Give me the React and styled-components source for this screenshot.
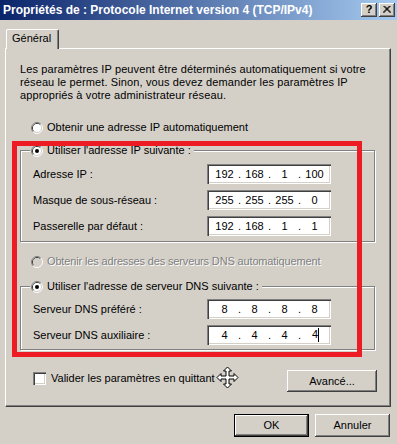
import React from 'react';
import styled, { createGlobalStyle } from 'styled-components';

const GlobalStyle = createGlobalStyle`
  html, body { margin: 0; padding: 0; background: #D4D0C8; }
  *, *::before, *::after { box-sizing: border-box; }
`;

const FONT = `'Liberation Sans', Tahoma, Arial, sans-serif`;

const Window = styled.div`
  position: relative;
  width: 397px;
  height: 444px;
  background: #d4d0c8;
  font-family: ${FONT};
  font-size: 11px;
  line-height: 13px;
  color: #000;
  display: flex;
  flex-direction: column;
  overflow: hidden;
`;

const TitleBar = styled.div`
  height: 20px;
  display: flex;
  align-items: center;
  padding: 0 2px 0 3px;
  background: linear-gradient(to right, #0a246a, #a6caf0);
`;

const Title = styled.div`
  flex: 1;
  color: #fff;
  font-weight: bold;
  font-size: 12px;
  white-space: nowrap;
`;

const CaptionButtons = styled.div`
  display: flex;
  gap: 2px;
`;

const CaptionButton = styled.div`
  width: 16px;
  height: 14px;
  background: #d4d0c8;
  box-shadow: inset -1px -1px #404040, inset 1px 1px #fff, inset -2px -2px #808080;
  display: flex;
  align-items: center;
  justify-content: center;
  font-weight: bold;
  font-size: 11px;
  line-height: 11px;
  padding-bottom: 1px;
  color: #000;
`;

const Body = styled.div`
  flex: 1;
  display: flex;
  flex-direction: column;
  padding: 9px 6px 0 5px;
`;

const TabStrip = styled.div`
  display: flex;
  padding-left: 1px;
`;

const Tab = styled.div`
  position: relative;
  z-index: 1;
  width: 53px;
  height: 20px;
  margin-bottom: -1px;
  padding: 2px 0 0 5px;
  background: #d4d0c8;
  border-top: 1px solid #fff;
  border-left: 1px solid #fff;
  border-right: 1px solid #404040;
  border-top-left-radius: 2px;
  border-top-right-radius: 2px;
  box-shadow: inset -1px 0 #808080;
`;

const Panel = styled.div`
  height: 359px;
  border-top: 1px solid #fff;
  border-left: 1px solid #fff;
  border-right: 1px solid #404040;
  border-bottom: 1px solid #404040;
  box-shadow: inset -1px -1px #808080;
  padding: 14px 0 0 14px;
  display: flex;
  flex-direction: column;
`;

const Description = styled.p`
  margin: 0;
  white-space: nowrap;
  letter-spacing: 0.12px;
`;

const RadioRow = styled.div`
  display: flex;
  align-items: center;
  gap: 4px;
  height: 13px;
  margin: ${p => p.$mt || 0}px 0 0 ${p => p.$ml ?? 11}px;
  white-space: nowrap;
  color: ${p => (p.$disabled ? '#808080' : '#000')};
  text-shadow: ${p => (p.$disabled ? '1px 1px 0 #fff' : 'none')};
  letter-spacing: ${p => (p.$disabled ? '-0.15px' : 'normal')};
`;

const Group = styled.fieldset`
  width: 355px;
  margin: ${p => p.$mt}px 0 0 0;
  padding: ${p => p.$pt}px 0 ${p => p.$pb}px 0;
  border: 1px solid #808080;
  box-shadow: inset 1px 1px #fff, 1px 1px #fff;
  min-width: 0;
`;

const Legend = styled.legend`
  margin-left: 9px;
  padding: 0 3px 0 1px;
  background: #d4d0c8;
  height: 13px;
  display: flex;
  align-items: center;
  gap: 4px;
  white-space: nowrap;
`;

const Rows = styled.div`
  display: grid;
  grid-template-columns: 174px 124px;
  row-gap: 6px;
  align-items: center;
  padding-left: 12px;
`;

const Label = styled.div`
  white-space: nowrap;
`;

const FieldBox = styled.div`
  width: 124px;
  height: 20px;
  display: flex;
  align-items: center;
  padding-left: 5px;
  background: #fff;
  box-shadow: inset 1px 1px #808080, inset 2px 2px #404040, inset -1px -1px #fff, inset -2px -2px #d4d0c8;
`;

const Seg = styled.span`
  width: 25px;
  text-align: center;
  white-space: nowrap;
`;

const Dot = styled.span`
  width: 5px;
  text-align: center;
`;

const Caret = styled.span`
  display: inline-block;
  width: 1px;
  height: 14px;
  background: #000;
  vertical-align: middle;
  margin: -2px -2px 0 0;
`;

const BottomRow = styled.div`
  display: flex;
  justify-content: space-between;
  align-items: flex-start;
  width: 357px;
  margin-top: 20px;
  padding-left: 13px;
`;

const CheckRow = styled.label`
  display: flex;
  align-items: center;
  gap: 5px;
  margin-top: 2px;
  height: 13px;
  white-space: nowrap;
`;

const CheckBox = styled.span`
  width: 13px;
  height: 13px;
  background: #fff;
  box-shadow: inset 1px 1px #808080, inset 2px 2px #404040, inset -1px -1px #fff, inset -2px -2px #d4d0c8;
`;

const Button = styled.button`
  width: ${p => p.$w || 75}px;
  height: ${p => p.$h || 23}px;
  padding: 0;
  background: #d4d0c8;
  font: inherit;
  color: #000;
  border: ${p => (p.$default ? '1px solid #000' : 'none')};
  box-shadow: inset -1px -1px #404040, inset 1px 1px #fff, inset -2px -2px #808080;
`;

const DialogButtons = styled.div`
  display: flex;
  justify-content: flex-end;
  gap: 6px;
  margin: 7px 1px 0 0;
`;

const Highlight = styled.div`
  position: absolute;
  left: 12px;
  top: 141px;
  width: 350px;
  height: 216px;
  border: 5px solid #ed1c24;
  pointer-events: none;
`;

const Cursor = styled.svg`
  position: absolute;
  left: 216px;
  top: 366px;
`;

const RadioSvg = styled.svg`
  flex: none;
`;

const Radio = ({ checked, disabled }) => (
  <RadioSvg width="12" height="12" viewBox="0 0 12 12">
    <path d="M2.11 9.89 A5.5 5.5 0 0 1 9.89 2.11" fill="none" stroke="#808080" />
    <path d="M9.89 2.11 A5.5 5.5 0 0 1 2.11 9.89" fill="none" stroke="#fff" />
    <path d="M2.82 9.18 A4.5 4.5 0 0 1 9.18 2.82" fill="none" stroke="#404040" />
    <path d="M9.18 2.82 A4.5 4.5 0 0 1 2.82 9.18" fill="none" stroke="#d4d0c8" />
    <circle cx="6" cy="6" r="4" fill={disabled ? '#d4d0c8' : '#fff'} />
    {checked && <circle cx="6" cy="6" r="2" fill="#000" />}
  </RadioSvg>
);

const IpField = ({ value, caret }) => {
  const parts = value.split('.');
  return (
    <FieldBox>
      {parts.map((p, i) => (
        <React.Fragment key={i}>
          {i > 0 && <Dot>.</Dot>}
          <Seg>
            {p}
            {caret && i === parts.length - 1 && <Caret />}
          </Seg>
        </React.Fragment>
      ))}
    </FieldBox>
  );
};

export default function App() {
  return (
    <>
      <GlobalStyle />
      <Window>
        <TitleBar>
          <Title>Propriétés de : Protocole Internet version 4 (TCP/IPv4)</Title>
          <CaptionButtons>
            <CaptionButton>?</CaptionButton>
            <CaptionButton>
              <svg width="8" height="7" viewBox="0 0 8 7">
                <path d="M0.5 0 L7.5 7 M1.5 0 L8 6.5 M7.5 0 L0.5 7 M6.5 0 L0 6.5" stroke="#000" strokeWidth="1" fill="none" />
              </svg>
            </CaptionButton>
          </CaptionButtons>
        </TitleBar>
        <Body>
          <TabStrip>
            <Tab>Général</Tab>
          </TabStrip>
          <Panel>
            <Description>
              Les paramètres IP peuvent être déterminés automatiquement si votre
              <br />
              réseau le permet. Sinon, vous devez demander les paramètres IP
              <br />
              appropriés à votre administrateur réseau.
            </Description>
            <RadioRow $mt={19}>
              <Radio />
              Obtenir une adresse IP automatiquement
            </RadioRow>
            <Group $mt={10} $pt={7} $pb={5}>
              <Legend>
                <Radio checked />
                Utiliser l'adresse IP suivante :
              </Legend>
              <Rows>
                <Label>Adresse IP :</Label>
                <IpField value="192.168.1.100" />
                <Label>Masque de sous-réseau :</Label>
                <IpField value="255.255.255.0" />
                <Label>Passerelle par défaut :</Label>
                <IpField value="192.168.1.1" />
              </Rows>
            </Group>
            <RadioRow $mt={13} $disabled>
              <Radio disabled />
              Obtenir les adresses des serveurs DNS automatiquement
            </RadioRow>
            <Group $mt={12} $pt={6} $pb={4}>
              <Legend>
                <Radio checked />
                Utiliser l'adresse de serveur DNS suivante :
              </Legend>
              <Rows>
                <Label>Serveur DNS préféré :</Label>
                <IpField value="8.8.8.8" />
                <Label>Serveur DNS auxiliaire :</Label>
                <IpField value="4.4.4.4" caret />
              </Rows>
            </Group>
            <BottomRow>
              <CheckRow>
                <CheckBox />
                Valider les paramètres en quittant
              </CheckRow>
              <Button $w={90} $h={22}>Avancé...</Button>
            </BottomRow>
          </Panel>
          <DialogButtons>
            <Button $default>OK</Button>
            <Button>Annuler</Button>
          </DialogButtons>
        </Body>
        <Highlight />
        <Cursor width="23" height="23" viewBox="0 0 23 23">
          <path
            d="M11.5 1 L15.5 5 L13 5 L13 10 L18 10 L18 7.5 L22 11.5 L18 15.5 L18 13 L13 13 L13 18 L15.5 18 L11.5 22 L7.5 18 L10 18 L10 13 L5 13 L5 15.5 L1 11.5 L5 7.5 L5 10 L10 10 L10 5 L7.5 5 Z"
            fill="#fff"
            stroke="#000"
            strokeWidth="1"
          />
        </Cursor>
      </Window>
    </>
  );
}
